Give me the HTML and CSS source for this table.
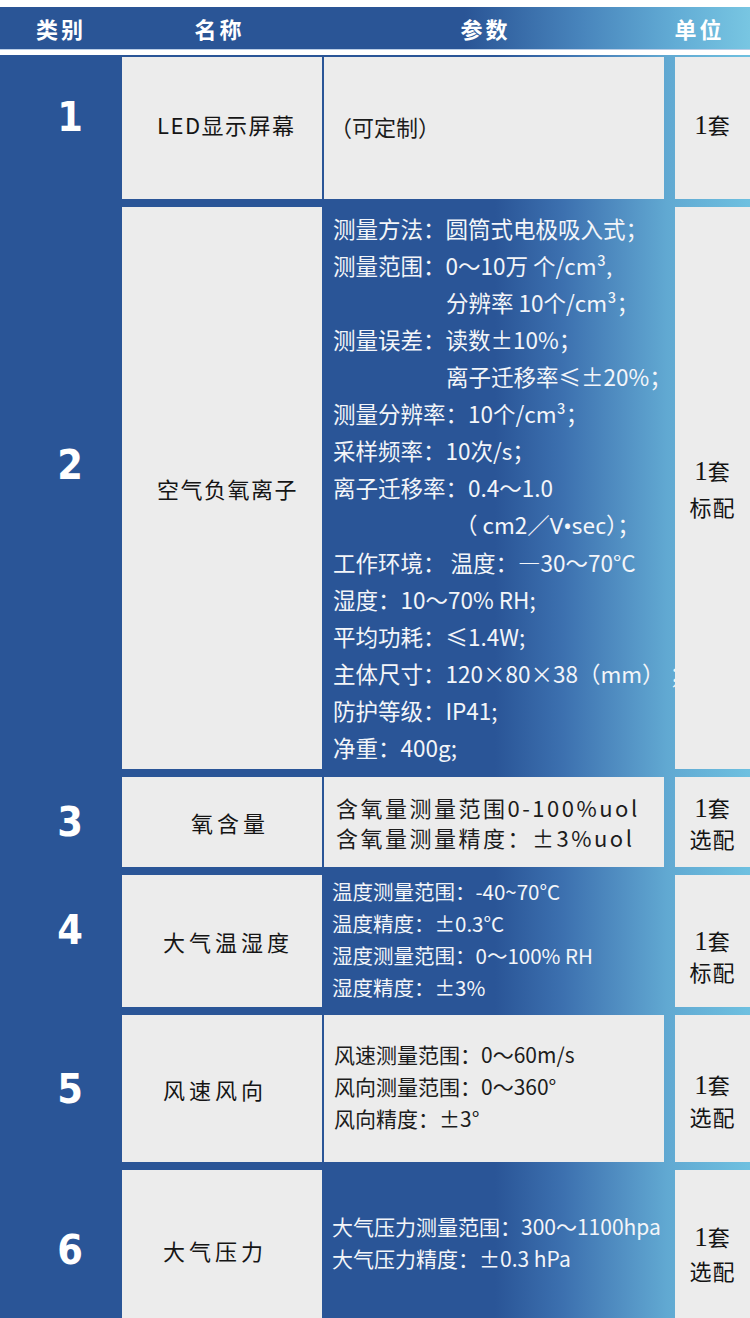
FILE: index.html
```html
<!DOCTYPE html>
<html lang="zh-CN">
<head>
<meta charset="utf-8">
<title>参数表</title>
<link rel="stylesheet" href="styles.css">
</head>
<body>
<div class="page">
  <div class="head">
    <div class="hcell hcell--type">类别</div>
    <div class="hcell hcell--name">名称</div>
    <div class="hcell hcell--param">参数</div>
    <div class="hcell hcell--unit">单位</div>
  </div>

  <div class="table">
    <div class="row row--1">
      <div class="num num--up">1</div>
      <div class="name name--wide name--r1">LED显示屏幕</div>
      <div class="param param--gray param--r1">（可定制）</div>
      <div class="unit unit--r1"><div><span class="qty">1</span>套</div></div>
    </div>

    <div class="row row--2">
      <div class="num num--up2">2</div>
      <div class="name name--wide">空气负氧离子</div>
      <div class="param param--r2">
        <p>测量方法：圆筒式电极吸入式；</p>
        <p>测量范围：0～10万 个/cm³,</p>
        <p class="indent">分辨率 10个/cm³；</p>
        <p>测量误差：读数±10%；</p>
        <p class="indent">离子迁移率≤±20%；</p>
        <p>测量分辨率：10个/cm³；</p>
        <p>采样频率：10次/s；</p>
        <p>离子迁移率：0.4～1.0</p>
        <p class="indent2">（ cm2／<span class="latin">V•sec</span>）；</p>
        <p>工作环境： 温度：—30～70°C</p>
        <p>湿度：10～70% RH;</p>
        <p>平均功耗：≤1.4W;</p>
        <p>主体尺寸：120×80×38（mm） ；</p>
        <p>防护等级：IP41;</p>
        <p>净重：400g;</p>
      </div>
      <div class="unit unit--r2"><div><span class="qty">1</span>套<br>标配</div></div>
    </div>

    <div class="row row--3">
      <div class="num">3</div>
      <div class="name name--r3">氧含量</div>
      <div class="param param--gray param--r3">
        <p>含氧量测量范围0-100%uol</p>
        <p>含氧量测量精度：±3%uol</p>
      </div>
      <div class="unit unit--r3"><div><span class="qty">1</span>套<br>选配</div></div>
    </div>

    <div class="row row--4">
      <div class="num num--up">4</div>
      <div class="name">大气温湿度</div>
      <div class="param param--r4">
        <p>温度测量范围：-40~70°C</p>
        <p>温度精度：±0.3°C</p>
        <p>湿度测量范围：0～100% RH</p>
        <p>湿度精度：±3%</p>
      </div>
      <div class="unit unit--r4"><div><span class="qty">1</span>套<br>标配</div></div>
    </div>

    <div class="row row--5">
      <div class="num">5</div>
      <div class="name">风速风向</div>
      <div class="param param--gray param--r5">
        <p>风速测量范围：0～60m/s</p>
        <p>风向测量范围：0～360°</p>
        <p>风向精度：±3°</p>
      </div>
      <div class="unit unit--r5"><div><span class="qty">1</span>套<br>选配</div></div>
    </div>

    <div class="row row--6">
      <div class="num">6</div>
      <div class="name">大气压力</div>
      <div class="param param--r6">
        <p>大气压力测量范围：300～1100hpa</p>
        <p>大气压力精度：±0.3 hPa</p>
      </div>
      <div class="unit unit--r6"><div><span class="qty">1</span>套<br>选配</div></div>
    </div>
  </div>
</div>
</body>
</html>
```

FILE: styles.css
```css
* {
  box-sizing: border-box;
  margin: 0;
  padding: 0;
}

html, body {
  background: #ffffff;
}

body {
  width: 750px;
  overflow: hidden;
  font-family: "Noto Sans CJK SC", "Noto Sans", sans-serif;
}

.page {
  padding-top: 7px;
}

/* ---------- header ---------- */
.head {
  height: 43px;
  display: flex;
  align-items: center;
  background: linear-gradient(90deg, #2a5596 0%, #2a5596 62%, #4783bb 77%, #62acd5 90%, #78c6e2 100%);
  border-bottom: 1px solid #b9cde6;
  margin-bottom: 5px;
  color: #ffffff;
  font-size: 22px;
  font-weight: 700;
  letter-spacing: 3px;
}

.hcell {
  text-align: center;
  line-height: 1;
}

.hcell--type { width: 122px; }
.hcell--name { width: 200px; padding-right: 5px; }
.hcell--param { width: 342px; padding-right: 15px; }
.hcell--unit { width: 86px; padding-right: 15px; }

/* ---------- table ---------- */
.table {
  padding-top: 2px;
  display: flex;
  flex-direction: column;
  gap: 8px;
  background: linear-gradient(90deg, #2a5597 0%, #2a5597 66%, #3c70af 75%, #5290c3 83%, #61a9d2 89%, #6ec0e0 100%);
}

.row {
  display: grid;
  grid-template-columns: 122px 200px 342px 86px;
}

.row--1 { height: 142px; }
.row--2 { height: 562px; }
.row--3 { height: 90px; }
.row--4 { height: 132px; }
.row--5 { height: 147px; }
.row--6 { height: 160px; }

/* number column */
.num {
  display: flex;
  align-items: center;
  justify-content: center;
  padding-left: 18px;
  color: #ffffff;
  font-family: "DejaVu Sans", "Noto Sans", sans-serif;
  font-stretch: condensed;
  font-weight: 700;
  font-size: 41px;
}

.num--up { padding-bottom: 22px; }
.num--up2 { padding-bottom: 46px; }

/* name column */
.name {
  display: flex;
  align-items: center;
  padding-left: 41px;
  background: #ececec;
  color: #151515;
  font-size: 22px;
  letter-spacing: 4px;
}

.name--wide {
  padding-left: 35px;
  letter-spacing: 1.5px;
}

.name--r1 {
  padding-bottom: 8px;
}

.name--r3 {
  padding-left: 69px;
}

/* params column */
.param {
  margin-left: 2px;
  display: flex;
  flex-direction: column;
  justify-content: center;
  color: #f3f5f9;
  font-size: 22px;
  white-space: nowrap;
}

.param--gray {
  background: #ececec;
  color: #1c1c1c;
}

.param--r1 {
  padding-left: 6px;
  padding-bottom: 5px;
}

.param--r2 {
  padding-left: 9px;
  line-height: 37px;
  font-size: 22.5px;
}

.param--r2 .indent { padding-left: 113px; }
.param--r2 .indent2 { padding-left: 122px; }

.latin {
  font-family: "Noto Sans", sans-serif;
}

.param--r3 {
  padding-left: 12px;
  line-height: 30px;
  letter-spacing: 2.5px;
}

.param--r4 {
  padding-left: 8px;
  font-size: 20.5px;
  line-height: 32px;
  padding-bottom: 4px;
}

.param--r5 {
  padding-left: 10px;
  font-size: 21px;
  line-height: 32px;
  padding-bottom: 6px;
}

.param--r6 {
  padding-left: 8px;
  font-size: 21px;
  line-height: 32px;
  padding-bottom: 16px;
}

/* unit column */
.unit {
  position: relative;
  margin-left: 11px;
  display: flex;
  align-items: center;
  justify-content: center;
  text-align: center;
  background: #ececec;
  color: #141414;
  font-family: "Noto Sans CJK SC", sans-serif;
  font-size: 22px;
  line-height: 32px;
  letter-spacing: 1px;
}

.qty {
  font-family: "Liberation Serif", serif;
  font-size: 27px;
  letter-spacing: 0;
}

.unit--r1 { padding-bottom: 8px; }
.unit--r2 { line-height: 35px; }
.unit--r3 { line-height: 30px; }
.unit--r4 { padding-top: 28px; line-height: 30px; }
.unit--r5 { padding-top: 24px; line-height: 31px; }
.unit--r6 { padding-top: 6px; line-height: 33px; }
```
